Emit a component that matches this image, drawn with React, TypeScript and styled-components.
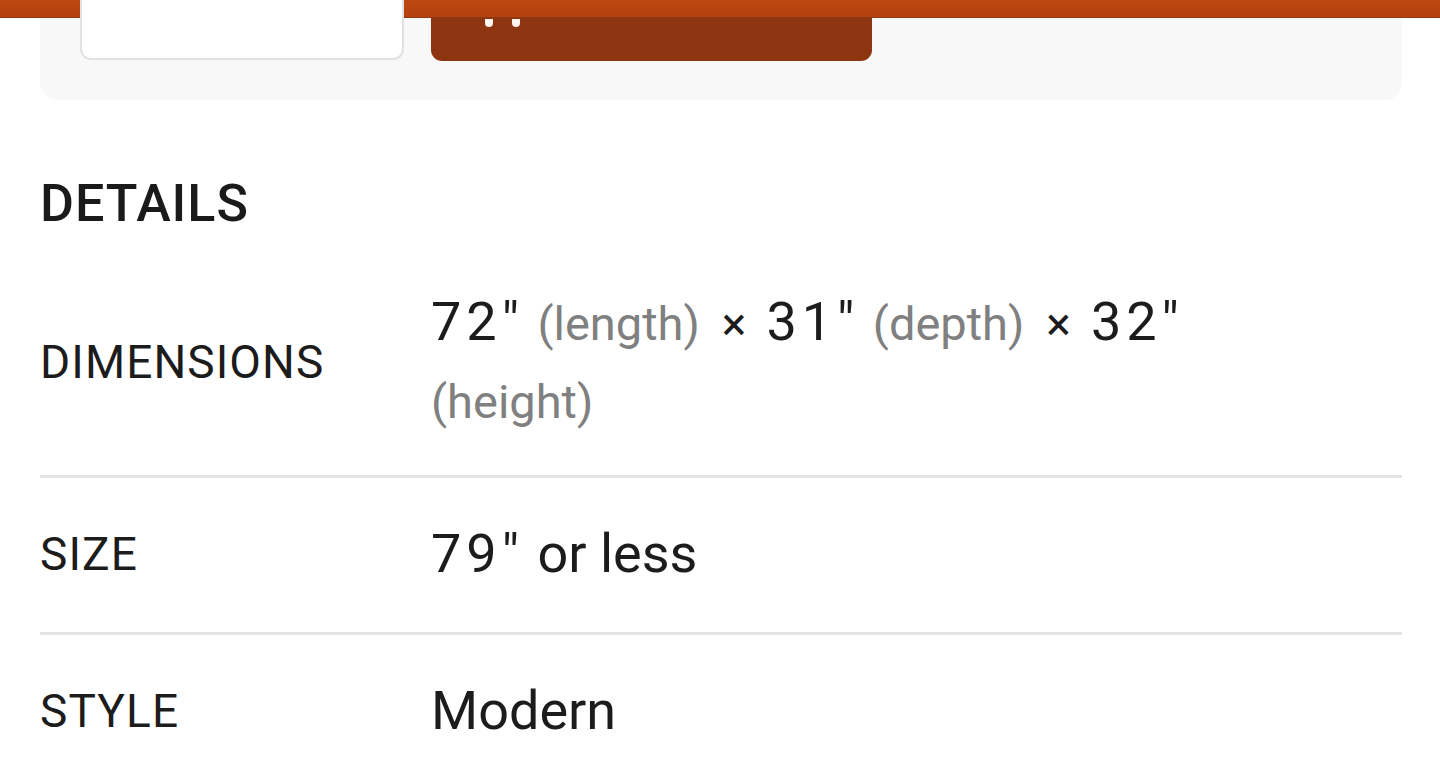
import React from "react";
import styled, { createGlobalStyle } from "styled-components";

const Global = createGlobalStyle`
  html, body { margin: 0; padding: 0; background: #ffffff; }
  body {
    width: 1440px;
    height: 777px;
    overflow: hidden;
    font-family: Roboto, "Liberation Sans", Arial, sans-serif;
    color: #1c1c1c;
  }
`;

const Page = styled.div`
  display: flex;
  flex-direction: column;
  width: 1440px;
`;

const TopBar = styled.div`
  height: 17px;
  background: linear-gradient(#bd4710, #b3420f);
  border-bottom: 1px solid #8f3a12;
`;

const ActionPanel = styled.div`
  margin: 0 38px 0 40px;
  padding: 0 40px 39px;
  background: #f8f8f8;
  border-radius: 0 0 18px 18px;
  display: flex;
  gap: 27px;
`;

const QtyBox = styled.div`
  width: 320px;
  height: 40px;
  margin-top: -18px;
  padding-top: 18px;
  background: #ffffff;
  border: 2px solid #e2e2e2;
  border-top: none;
  border-radius: 0 0 11px 11px;
  box-sizing: content-box;
`;

const CartButton = styled.div`
  width: 441px;
  height: 43px;
  background: #8d3510;
  border-radius: 0 0 11px 11px;
  display: flex;
  gap: 19px;
  padding-left: 54px;
  box-sizing: border-box;
  align-items: flex-start;
`;

const Dot = styled.span`
  width: 8px;
  height: 8px;
  margin-top: 1px;
  border-radius: 0 0 5px 5px;
  background: #fff4ee;
`;

const Section = styled.section`
  margin: 0 38px 0 40px;
  display: flex;
  flex-direction: column;
`;

const Heading = styled.h2`
  margin: 74px 0 0;
  font-size: 52px;
  line-height: 60px;
  font-weight: 500;
  letter-spacing: 1px;
  color: #1a1a1a;
`;

const Row = styled.div<{ $first?: boolean }>`
  display: flex;
  align-items: center;
  padding: ${(p) => (p.$first ? "50px 0 36px" : "38px 0 41px")};
  border-top: ${(p) => (p.$first ? "none" : "3px solid #e4e4e4")};
`;

const Label = styled.div`
  width: 391px;
  flex: none;
  font-size: 46px;
  line-height: 60px;
  letter-spacing: 1.1px;
  color: #1c1c1c;
`;

const Value = styled.div`
  width: 790px;
  font-size: 54px;
  line-height: 75px;
  color: #1c1c1c;
`;

const Num = styled.span`
  letter-spacing: 5px;
`;

const Note = styled.span`
  font-size: 47px;
  color: #808080;
`;

const Times = styled.span`
  font-size: 46px;
  margin: 0 20px 0 22px;
`;

export default function App() {
  return (
    <>
      <Global />
      <Page>
        <TopBar />
        <ActionPanel>
          <QtyBox />
          <CartButton>
            <Dot />
            <Dot />
          </CartButton>
        </ActionPanel>
        <Section>
          <Heading>DETAILS</Heading>
          <Row $first>
            <Label>DIMENSIONS</Label>
            <Value>
              <Num>72"</Num> <Note>(length)</Note>
              <Times>×</Times>
              <Num>31"</Num> <Note>(depth)</Note>
              <Times>×</Times>
              <Num>32"</Num> <Note>(height)</Note>
            </Value>
          </Row>
          <Row>
            <Label>SIZE</Label>
            <Value>
              <Num>79"</Num> or less
            </Value>
          </Row>
          <Row>
            <Label>STYLE</Label>
            <Value>Modern</Value>
          </Row>
        </Section>
      </Page>
    </>
  );
}
